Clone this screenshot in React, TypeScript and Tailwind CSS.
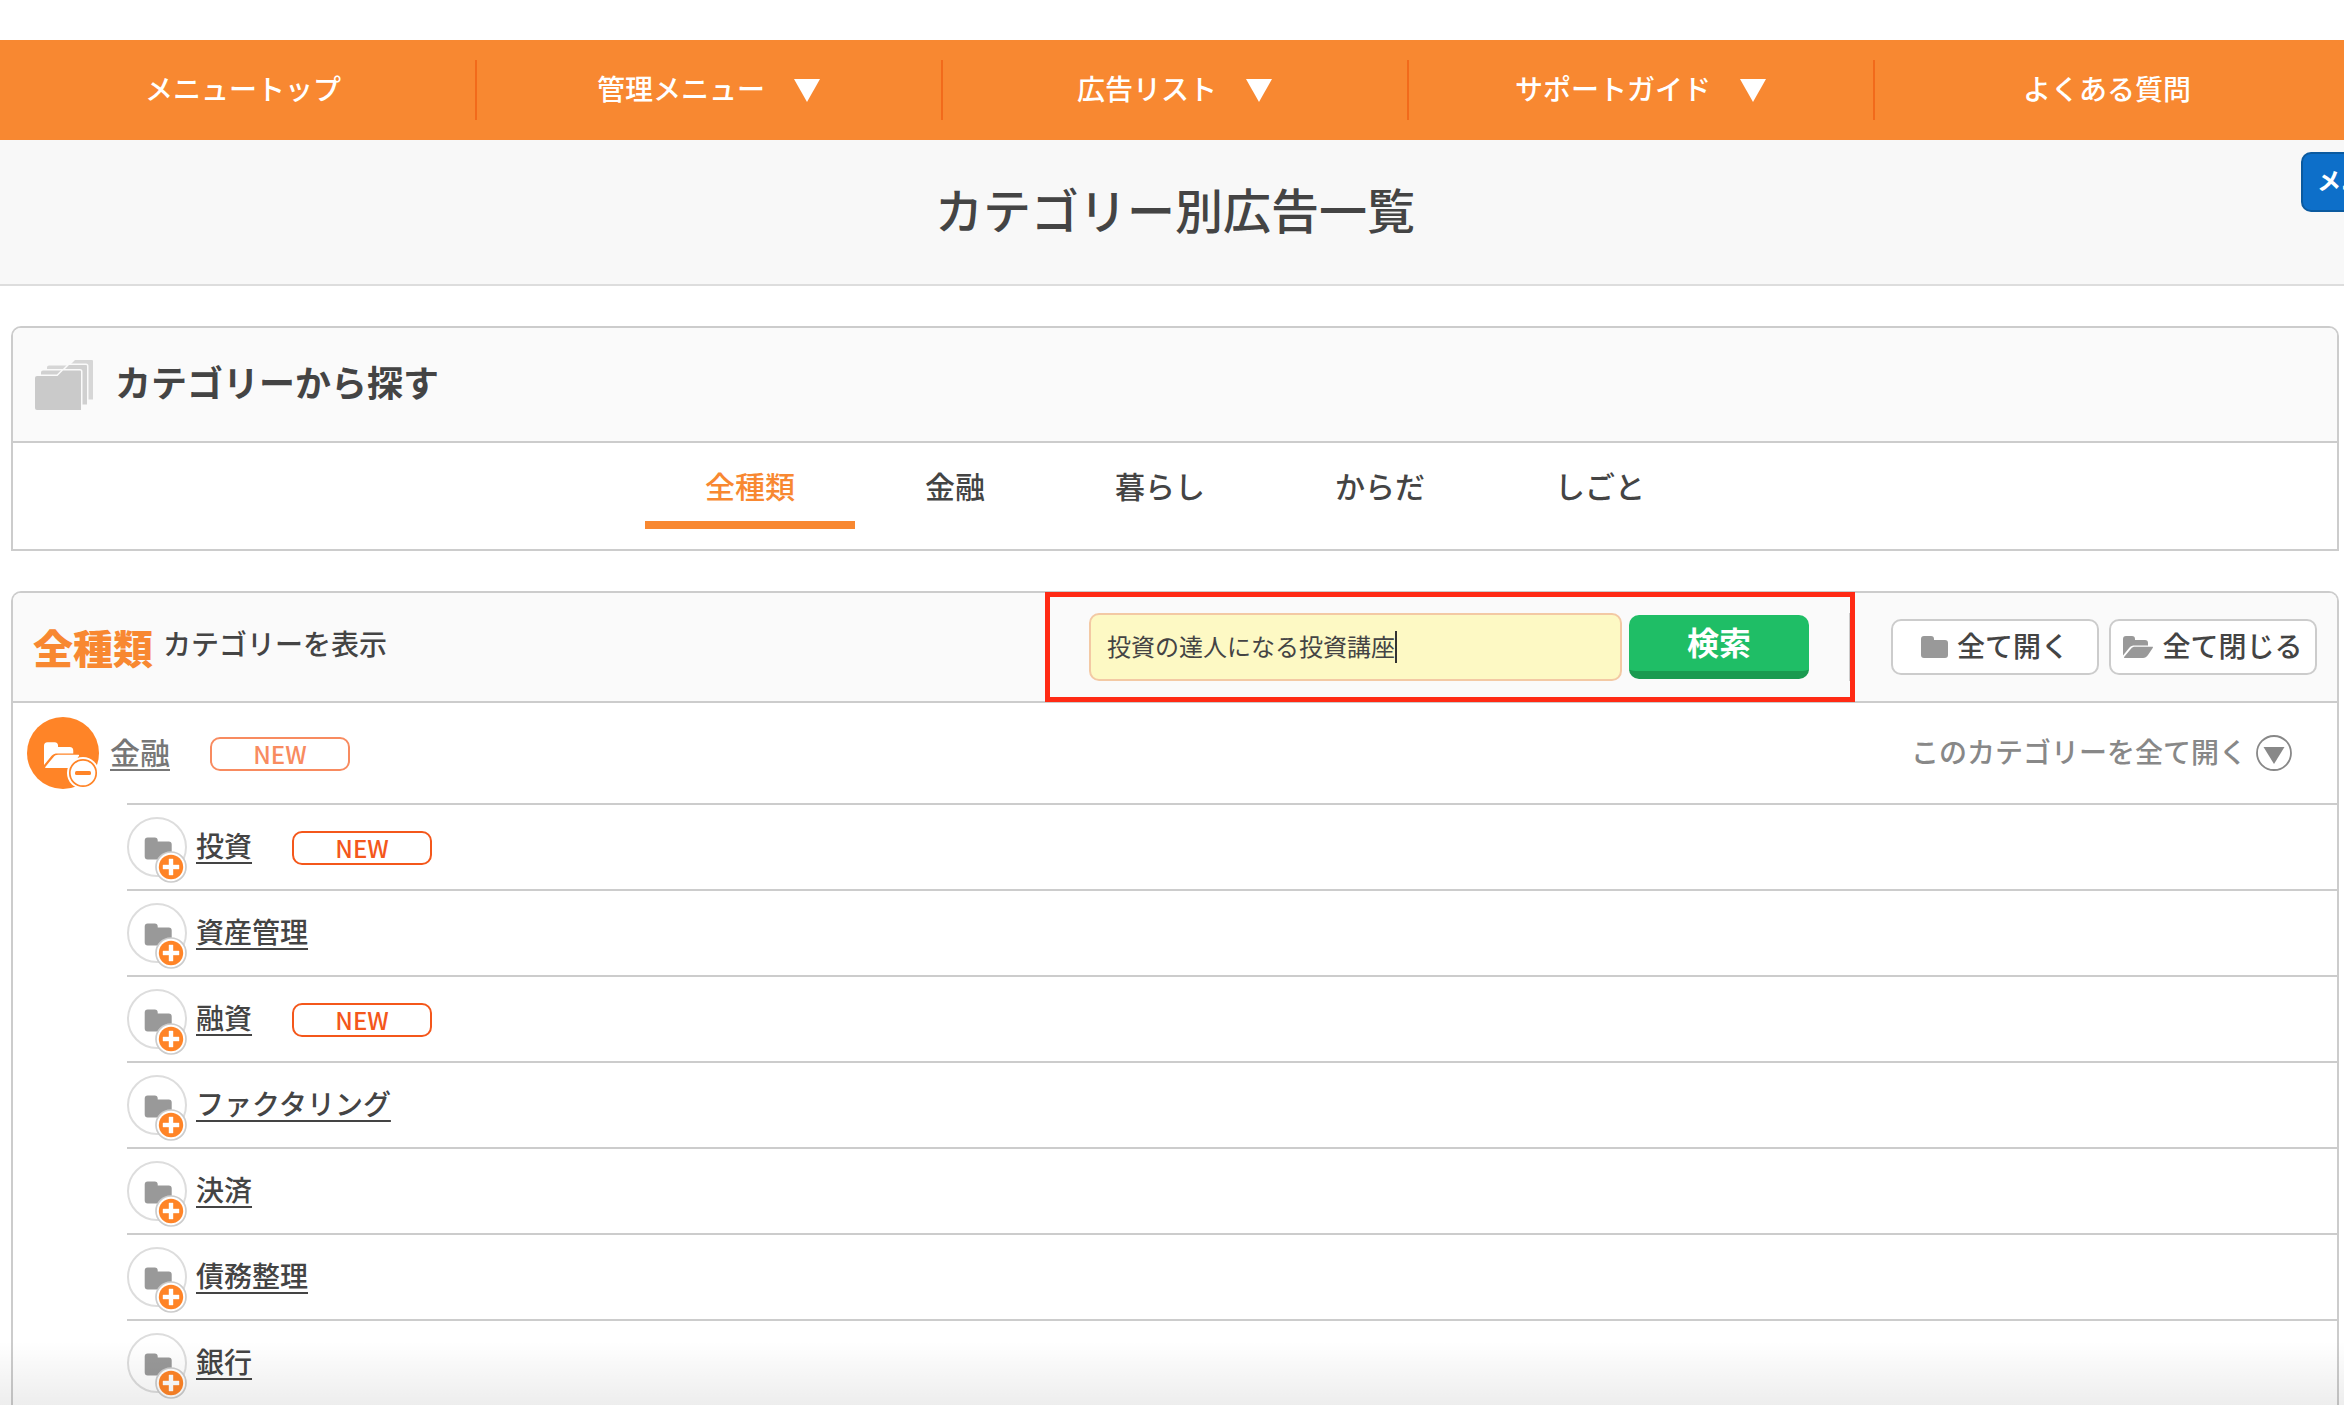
import React from "react";

type NavItem = { label: string; hasMenu?: boolean };
type Category = { name: string; isNew?: boolean };

const navItems: NavItem[] = [
  { label: "メニュートップ" },
  { label: "管理メニュー", hasMenu: true },
  { label: "広告リスト", hasMenu: true },
  { label: "サポートガイド", hasMenu: true },
  { label: "よくある質問" },
];

const tabs = ["全種類", "金融", "暮らし", "からだ", "しごと"];

const subCategories: Category[] = [
  { name: "投資", isNew: true },
  { name: "資産管理" },
  { name: "融資", isNew: true },
  { name: "ファクタリング" },
  { name: "決済" },
  { name: "債務整理" },
  { name: "銀行" },
];

const FOLDER_PATH =
  "M3 0h7a3 3 0 0 1 3 3v1h11a3 3 0 0 1 3 3v12a3 3 0 0 1-3 3H3a3 3 0 0 1-3-3V3a3 3 0 0 1 3-3z";

const OPEN_FOLDER_PATH =
  "M3 0h6a3 3 0 0 1 3 3v1h10a3 3 0 0 1 3 3v2.500H11.500C9.500 9.500 8 10 6.500 11.500L0 19.500V3a3 3 0 0 1 3-3z M12 10.700h17.500c.6 0 .6.600.200 1.200L25 19c-1.400 2-3 3-5 3H1.600c-.7 0-.8-.6-.3-1.200L8 12.700c1.200-1.400 2.400-2 4-2z";

const FolderIcon: React.FC = () => (
  <svg width="27" height="22" viewBox="0 0 27 22" fill="#999" aria-hidden="true">
    <path d={FOLDER_PATH} />
  </svg>
);

const OpenFolderIcon: React.FC = () => (
  <svg width="30" height="22" viewBox="0 0 30 22" fill="#999" aria-hidden="true">
    <path d={OPEN_FOLDER_PATH} />
  </svg>
);

const FolderStackIcon: React.FC = () => {
  const sheet = "M2 16h20.500l5.500-5.500H45a1 1 0 0 1 1 1V50H2a2 2 0 0 1-2-2V18a2 2 0 0 1 2-2z";

  return (
    <svg width="58" height="50" viewBox="0 0 58 50" aria-hidden="true">
      <g stroke="#fafafa" strokeWidth="3" paintOrder="stroke">
        <path d={sheet} transform="translate(12 -10.500)" fill="#d6d6d6" />
        <path d={sheet} transform="translate(6 -5.500)" fill="#d0d0d0" />
        <path d={sheet} fill="#cacaca" />
      </g>
    </svg>
  );
};

const OpenedCategoryIcon: React.FC = () => (
  <svg width="72" height="72" viewBox="0 0 72 72" aria-hidden="true">
    <circle cx="36" cy="36" r="36" fill="#ff8427" />
    <path d={OPEN_FOLDER_PATH} fill="#fff" transform="translate(17 25.300) scale(1.170)" />
    <circle cx="56" cy="56" r="16" fill="#fff" />
    <circle cx="56" cy="56" r="13.200" fill="#fff" stroke="#ff8427" strokeWidth="1.700" />
    <rect x="48" y="54" width="16" height="4" rx="1.500" fill="#ff8427" />
  </svg>
);

const ClosedCategoryIcon: React.FC = () => (
  <svg
    className="overflow-visible"
    width="60"
    height="60"
    viewBox="0 0 60 60"
    aria-hidden="true"
  >
    <circle cx="30" cy="30" r="29" fill="#fff" stroke="#ddd" strokeWidth="2" />
    <path d={FOLDER_PATH} fill="#999" transform="translate(17.700 20.500)" />
    <circle cx="44" cy="50" r="15" fill="#fff" stroke="#ccc" strokeWidth="1.700" />
    <circle cx="44" cy="50" r="12.200" fill="#ff8427" />
    <path d="M42 42h4v6h6v4h-6v6h-4v-6h-6v-4h6z" fill="#fff" stroke="#fff" strokeWidth=".4" />
  </svg>
);

const NewBadge: React.FC<{ faded?: boolean }> = ({ faded }) => (
  <span
    className={`mt-[2px] ml-10 flex h-[34px] w-[140px] items-center justify-center rounded-[10px] border-2 text-2xl leading-none ${
      faded ? "border-[#f88b60] text-[#f88b60]" : "border-[#f4571b] text-[#f4571b]"
    }`}
  >
    NEW
  </span>
);

const App: React.FC = () => {
  return (
    <div className="relative overflow-hidden bg-white pt-10 font-['Noto_Sans_CJK_JP',sans-serif] font-medium text-[#444]">
      <nav className="flex bg-[#f88831] py-5 pr-[5px] pl-[11px]">
        {navItems.map(({ label, hasMenu }) => (
          <a
            key={label}
            href="#"
            className="flex h-[60px] flex-1 items-center justify-center gap-7 border-r-2 border-[#f26a1b] text-[28px] leading-none text-white last:border-r-0"
          >
            <span className="pb-1">{label}</span>
            {hasMenu && (
              <svg width="28" height="24" viewBox="0 0 28 24" fill="#fff" aria-hidden="true">
                <path d="M1 1h26L14 24z" />
              </svg>
            )}
          </a>
        ))}
      </nav>

      <header className="border-b-2 border-[#ddd] bg-[#f8f8f8] pt-11 pr-[5px] pb-[52px] pl-[11px]">
        <h1 className="text-center text-5xl leading-none">カテゴリー別広告一覧</h1>
      </header>

      <button
        type="button"
        className="absolute top-[152px] -right-[85px] h-[60px] w-[128px] rounded-[10px] border-2 border-[#0b5a9f] bg-[#0d6fc9] pb-1 text-2xl leading-none font-bold whitespace-nowrap text-white"
      >
        メニュー
      </button>

      <main className="flex flex-col gap-10 pt-10 pr-[5px] pl-[11px]">
        <section className="rounded-t-[10px] border-2 border-[#ccc]">
          <div className="flex items-center gap-[22px] rounded-t-lg border-b-2 border-[#ccc] bg-[#fafafa] px-[22px] pt-8 pb-[31px]">
            <FolderStackIcon />
            <h2 className="pb-2 text-4xl leading-none font-bold">カテゴリーから探す</h2>
          </div>
          <div className="flex justify-center gap-[10px] py-5">
            {tabs.map((tab, index) => (
              <button
                key={tab}
                type="button"
                className={`border-b-8 px-[60px] pt-1 pb-[18px] text-3xl ${
                  index === 0 ? "border-[#f88831] text-[#f88831]" : "border-transparent"
                }`}
              >
                {tab}
              </button>
            ))}
          </div>
        </section>

        <section className="rounded-t-[10px] border-2 border-b-0 border-[#ccc]">
          <div className="flex items-center rounded-t-lg border-b-2 border-[#ccc] bg-[#fafafa] p-5">
            <h2 className="mr-auto flex items-center gap-[10px] text-[28px] leading-none">
              <strong className="text-[40px] font-black text-[#f88831]">全種類</strong>
              <span className="pb-2">カテゴリーを表示</span>
            </h2>

            <form
              className="relative flex h-[68px] items-center gap-[7px] border-r-2 border-[#ccc] pr-10"
              onSubmit={(event) => event.preventDefault()}
            >
              <label className="relative">
                <input
                  type="text"
                  aria-label="キーワード"
                  defaultValue="投資の達人になる投資講座"
                  className="block h-[68px] w-[533px] rounded-[10px] border-2 border-[#f3c9a4] bg-[#fdf9c4] px-4 pb-1 text-2xl font-normal outline-none"
                />
                <span className="absolute top-[18px] left-[306px] h-8 w-[2px] bg-[#333]" />
              </label>
              <button
                type="submit"
                className="h-16 w-[180px] rounded-[10px] border-b-8 border-[#1a9a50] bg-[#1fbe66] pb-1 text-[32px] leading-none font-bold text-white"
              >
                検索
              </button>
              <span className="pointer-events-none absolute -inset-y-[21px] -right-[6px] -left-11 border-5 border-[#ff2a14]" />
            </form>

            <div className="ml-10 flex gap-[10px] text-[28px] leading-none">
              <button
                type="button"
                className="flex h-14 w-[208px] items-center justify-center gap-[9px] rounded-[10px] border-2 border-[#ccc] bg-white"
              >
                <FolderIcon />
                <span className="pb-1">全て開く</span>
              </button>
              <button
                type="button"
                className="flex h-14 w-[208px] items-center justify-center gap-[9px] rounded-[10px] border-2 border-[#ccc] bg-white"
              >
                <OpenFolderIcon />
                <span className="pb-1">全て閉じる</span>
              </button>
            </div>
          </div>

          <div className="flex h-[100px] items-center pr-[45px] pl-[14px]">
            <OpenedCategoryIcon />
            <a
              href="#"
              className="ml-[11px] pb-1 text-3xl leading-none text-[#777] underline decoration-2 underline-offset-5"
            >
              金融
            </a>
            <NewBadge faded />
            <button
              type="button"
              className="ml-auto flex items-center gap-[9px] text-[28px] leading-none text-[#888]"
            >
              <span className="pb-1">このカテゴリーを全て開く</span>
              <svg width="36" height="36" viewBox="0 0 36 36" aria-hidden="true">
                <circle cx="18" cy="18" r="17" fill="none" stroke="#888" strokeWidth="1.800" />
                <path d="M7.500 12h21L18 29z" fill="#888" />
              </svg>
            </button>
          </div>

          <ul className="ml-[114px]">
            {subCategories.map(({ name, isNew }) => (
              <li key={name} className="flex h-[86px] items-center border-t-2 border-[#ccc]">
                <ClosedCategoryIcon />
                <a
                  href="#"
                  className="ml-[9px] pb-1 text-[28px] leading-none underline decoration-2 underline-offset-5"
                >
                  {name}
                </a>
                {isNew && <NewBadge />}
              </li>
            ))}
          </ul>
        </section>
      </main>

      <div className="pointer-events-none absolute inset-x-0 bottom-0 h-16 bg-linear-to-t from-black/7 to-transparent" />
    </div>
  );
};

export default App;
